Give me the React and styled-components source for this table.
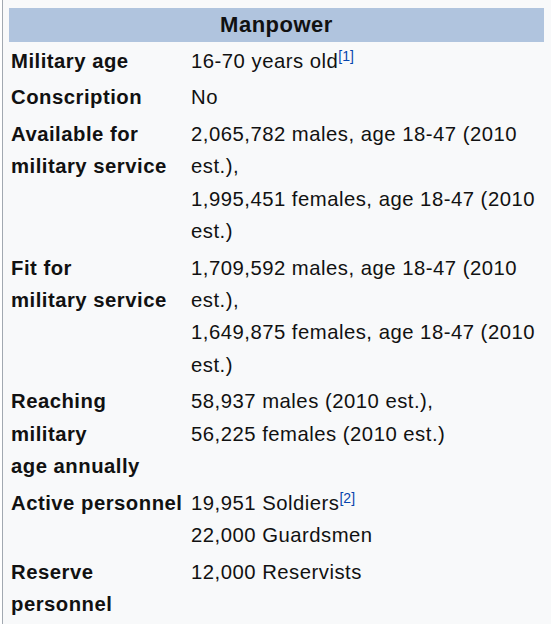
import React from 'react'
import styled, { createGlobalStyle } from 'styled-components'

const GlobalStyle = createGlobalStyle`
  html, body {
    margin: 0;
    padding: 0;
    background: #ffffff;
  }
  body {
    font-family: "Liberation Sans", Arial, sans-serif;
    overflow: hidden;
  }
`

const Infobox = styled.div`
  margin-left: 2px;
  border-left: 1px solid #a2a9b1;
  background: #f8f9fa;
  padding: 8px 7px 12px 6px;
  color: #111;
  min-height: 640px;
  box-sizing: border-box;
`

const Header = styled.div`
  background: #b0c4de;
  height: 33.5px;
  display: flex;
  align-items: center;
  justify-content: center;
  font-weight: bold;
  font-size: 22px;
  letter-spacing: 0.5px;
  margin-bottom: 1px;
`

const Row = styled.div`
  display: grid;
  grid-template-columns: 180px 1fr;
  padding: 2.1px 0;
  font-size: 20.3px;
  line-height: 32.4px;
  letter-spacing: 0.5px;
`

const Label = styled.div`
  font-weight: bold;
  padding: 0 4px 0 2px;
`

const Value = styled.div`
  padding: 0 2px 0 2px;
`

const Line = styled.div``

const Ref = styled.sup`
  font-size: 14px;
  line-height: 0;
  vertical-align: 7px;
  color: #0645ad;
  letter-spacing: 0;
`

const rows = [
  { label: ['Military age'], lines: [['16-70 years old', '[1]']] },
  { label: ['Conscription'], lines: [['No']] },
  {
    label: ['Available for', 'military service'],
    lines: [
      ['2,065,782 males, age 18-47 (2010 est.),'],
      ['1,995,451 females, age 18-47 (2010 est.)'],
    ],
  },
  {
    label: ['Fit for', 'military service'],
    lines: [
      ['1,709,592 males, age 18-47 (2010 est.),'],
      ['1,649,875 females, age 18-47 (2010 est.)'],
    ],
  },
  {
    label: ['Reaching', 'military', 'age annually'],
    lines: [['58,937 males (2010 est.),'], ['56,225 females (2010 est.)']],
  },
  {
    label: ['Active personnel'],
    lines: [['19,951 Soldiers', '[2]'], ['22,000 Guardsmen']],
  },
  { label: ['Reserve personnel'], lines: [['12,000 Reservists']] },
]

const App = () => {
  return (
    <>
      <GlobalStyle />
      <Infobox>
        <Header>Manpower</Header>
        {rows.map((row) => (
          <Row key={row.label.join(' ')}>
            <Label>
              {row.label.map((part) => (
                <Line key={part}>{part}</Line>
              ))}
            </Label>
            <Value>
              {row.lines.map(([text, ref]) => (
                <Line key={text}>
                  {text}
                  {ref && <Ref>{ref}</Ref>}
                </Line>
              ))}
            </Value>
          </Row>
        ))}
      </Infobox>
    </>
  )
}

export default App
